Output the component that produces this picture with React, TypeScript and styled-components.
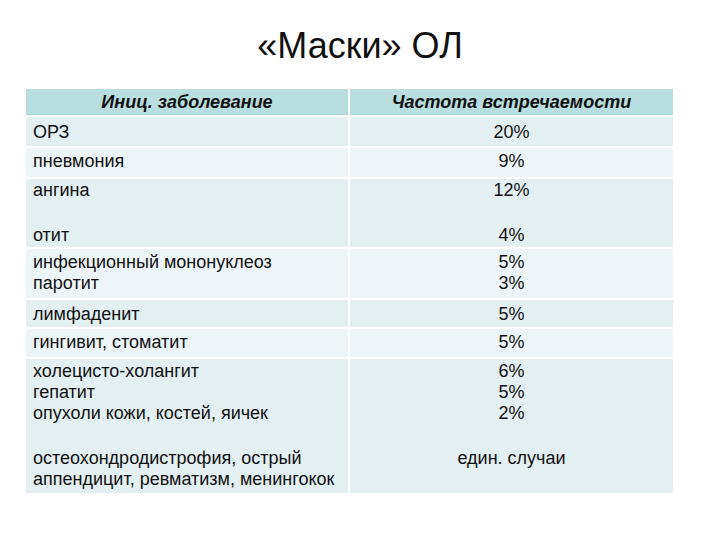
import React from "react";
import styled, { createGlobalStyle } from "styled-components";

const Global = createGlobalStyle`
  html, body { margin: 0; padding: 0; background: #ffffff; }
  body { font-family: "Liberation Sans", Arial, sans-serif; color: #111; }
`;

const Page = styled.div`
  width: 720px;
  height: 540px;
  display: flex;
  flex-direction: column;
  align-items: center;
  box-sizing: border-box;
  padding-top: 25px;
`;

const Title = styled.h1`
  margin: 0 0 22px;
  font-family: "Liberation Sans", Arial, sans-serif;
  font-weight: normal;
  font-size: 36px;
  line-height: 42px;
  color: #111;
`;

const Table = styled.div`
  display: grid;
  grid-template-columns: 322px 323px;
  grid-template-rows: 26px 29px 29px 68px 49px 27px 28px 134px;
  column-gap: 2px;
  row-gap: 2px;
  width: 647px;
  align-self: flex-start;
  margin-left: 26px;
  background: #ffffff;
`;

const HeadCell = styled.div`
  background: #b8dedf;
  border-bottom: 1px solid #a8d2d3;
  box-sizing: border-box;
  padding-top: 3px;
  text-align: center;
  font-size: 18px;
  line-height: 21px;
  font-weight: bold;
  font-style: italic;
  color: #111;
`;

const Cell = styled.div<{ $dark: boolean; $top: number; $center?: boolean }>`
  background: ${(p) => (p.$dark ? "#e4eff1" : "#eef5f8")};
  box-sizing: border-box;
  padding: ${(p) => p.$top}px 7px 0;
  font-size: 18px;
  line-height: 21px;
  color: #111;
  text-align: ${(p) => (p.$center ? "center" : "left")};
`;

const Line = styled.div``;

const Gap = styled.div`
  height: 24px;
`;

type RowData = { top: number; left: (string | null)[]; right: (string | null)[] };

const rows: RowData[] = [
  { top: 5, left: ["ОРЗ"], right: ["20%"] },
  { top: 3, left: ["пневмония"], right: ["9%"] },
  { top: 1, left: ["ангина", null, "отит"], right: ["12%", null, "4%"] },
  { top: 3, left: ["инфекционный мононуклеоз", "паротит"], right: ["5%", "3%"] },
  { top: 4, left: ["лимфаденит"], right: ["5%"] },
  { top: 3, left: ["гингивит, стоматит"], right: ["5%"] },
  {
    top: 2,
    left: [
      "холецисто-холангит",
      "гепатит",
      "опухоли кожи, костей, яичек",
      null,
      "остеохондродистрофия, острый",
      "аппендицит, ревматизм, менингокок",
    ],
    right: ["6%", "5%", "2%", null, "един. случаи"],
  },
];

const renderLines = (lines: (string | null)[]) =>
  lines.map((l, i) => (l === null ? <Gap key={i} /> : <Line key={i}>{l}</Line>));

export default function App() {
  return (
    <>
      <Global />
      <Page>
        <Title>«Маски» ОЛ</Title>
        <Table>
          <HeadCell>Иниц. заболевание</HeadCell>
          <HeadCell>Частота встречаемости</HeadCell>
          {rows.map((r, i) => (
            <React.Fragment key={i}>
              <Cell $dark={i % 2 === 0} $top={r.top}>
                {renderLines(r.left)}
              </Cell>
              <Cell $dark={i % 2 === 0} $top={r.top} $center>
                {renderLines(r.right)}
              </Cell>
            </React.Fragment>
          ))}
        </Table>
      </Page>
    </>
  );
}
